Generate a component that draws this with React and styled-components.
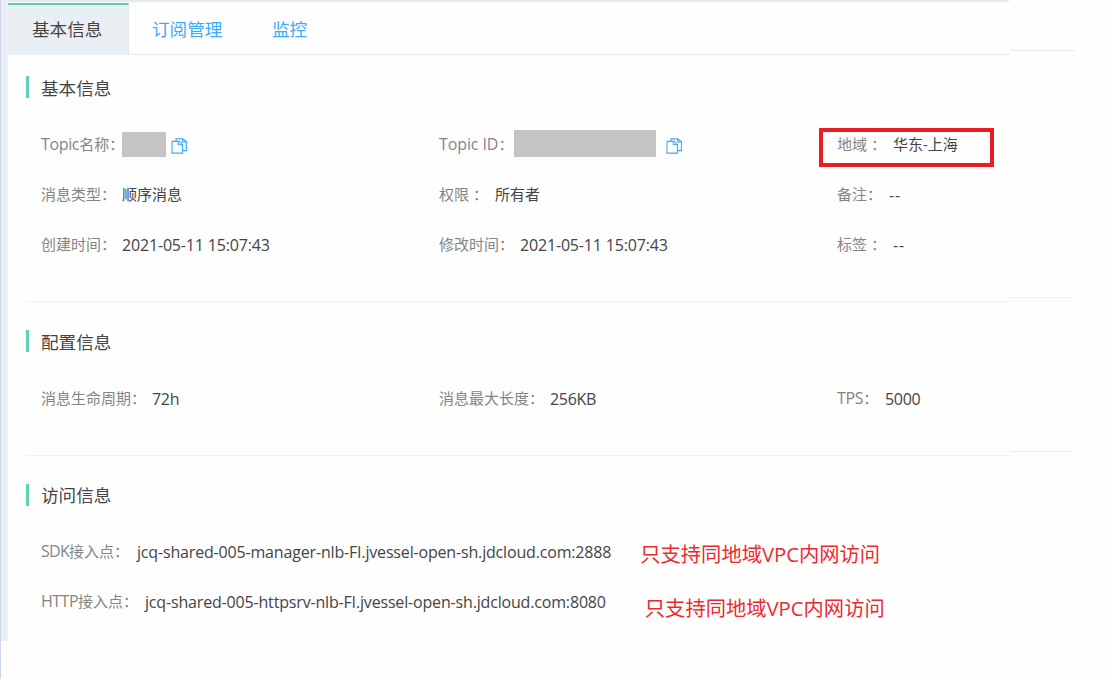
import React from "react";
import styled, { createGlobalStyle } from "styled-components";

const GlobalStyle = createGlobalStyle`
  * { box-sizing: border-box; }
  body {
    margin: 0;
    background: #fefefe;
    font-family: "Open Sans", "Noto Sans CJK SC", sans-serif;
    font-size: 15px;
    font-weight: 400;
    color: #444;
  }
`;

const Page = styled.div`
  display: flex;
  width: 1113px;
  height: 679px;
  overflow: hidden;
  border-left: 1px solid #cdd5ea;
`;

const Rail = styled.div`
  width: 6px;
  height: 641px;
  background: #e9eef5;
`;

const Panel = styled.main`
  width: 1002px;
  height: 641px;
  border-top: 2px solid #e5ebf2;
  border-left: 1px solid #f1f5f9;
`;

const Tabs = styled.nav`
  display: flex;
  height: 53px;
  border-bottom: 1px solid #e1e8f0;
`;

const Tab = styled.a`
  display: block;
  height: 52px;
  width: ${(p) => p.$width}px;
  margin-top: 1px;
  padding-left: ${(p) => p.$indent || 24}px;
  border-top: 2px solid ${(p) => (p.$active ? "#5fd0b2" : "transparent")};
  border-right: ${(p) => (p.$active ? "1px solid #e1e8f0" : "none")};
  background: ${(p) => (p.$active ? "#eaeff4" : "transparent")};
  color: ${(p) => (p.$active ? "#444" : "#38adff")};
  font-size: 17.6px;
  line-height: 48px;
  white-space: nowrap;
`;

const Section = styled.section`
  height: ${(p) => p.$height}px;
  margin-left: 18px;
  padding-top: ${(p) => p.$top}px;
  border-bottom: ${(p) => (p.$last ? "none" : "1px dotted #e6e6e6")};
`;

const Heading = styled.h2`
  height: 22px;
  margin: 0 0 ${(p) => p.$gap || 21}px;
  padding-left: 12px;
  border-left: 3px solid #5fd0b2;
  color: #444;
  font-size: 17.6px;
  font-weight: 400;
  line-height: ${(p) => p.$line || 24}px;
`;

const Row = styled.div`
  display: grid;
  grid-template-columns: 398px 398px 1fr;
  height: 50px;
  padding-left: 15px;
`;

const EndpointRow = styled.div`
  height: 50px;
  padding-left: 15px;
`;

const Field = styled.div`
  position: relative;
  display: flex;
  align-items: center;
  height: 50px;
  white-space: nowrap;
`;

const Label = styled.span`
  flex: none;
  width: ${(p) => p.$width}px;
  padding-bottom: 2px;
  color: #858585;
  line-height: 22px;
`;

const LabelLatin = styled.span`
  font-size: 16px;
  letter-spacing: ${(p) => p.$track ?? -0.35}px;
`;

const Value = styled.span`
  padding-bottom: 2px;
  color: #444;
  line-height: 22px;
`;

const LatinValue = styled(Value)`
  padding-bottom: 1px;
  font-size: 16px;
  letter-spacing: ${(p) => p.$track ?? -0.17}px;
`;

const Mask = styled.span`
  width: ${(p) => p.$width}px;
  height: ${(p) => p.$height}px;
  margin-right: ${(p) => p.$gap}px;
  margin-top: ${(p) => p.$shift}px;
  background: #c4c4c4;
`;

const Highlight = styled.span`
  position: absolute;
  left: -18px;
  top: 8px;
  width: 175px;
  height: 39px;
  border: 4px solid #ec1c24;
`;

const Note = styled.span`
  margin-left: ${(p) => p.$gap}px;
  margin-top: ${(p) => p.$drop}px;
  color: #ed2a30;
  font-size: 20.3px;
  line-height: 28px;
`;

const Side = styled.aside`
  width: 64px;
  margin-left: 1px;
`;

const SideLine = styled.div`
  height: ${(p) => p.$height}px;
  border-bottom: 1px ${(p) => (p.$solid ? "solid #e1e8f0" : "dotted #e6e6e6")};
`;

const CopySvg = styled.svg`
  display: block;
  margin-top: 2px;
`;

const CopyIcon = () => (
  <CopySvg width="16" height="16" viewBox="0 0 16 16" fill="none" stroke="#38adff" strokeWidth="1.1">
    <path d="M5 3V.9h6.7l3.7 2.6v9.1h-3.6M11.7 1v2.9h3.5" />
    <path d="M1 3.4h7l3.5 3v8.7H1zM7.3 3.6v3.2h4" />
  </CopySvg>
);

export default function App() {
  return (
    <>
      <GlobalStyle />
      <Page>
        <Rail />
        <Panel>
          <Tabs>
            <Tab $active $width={121}>基本信息</Tab>
            <Tab $width={119} $indent={23}>订阅管理</Tab>
            <Tab $width={90}>监控</Tab>
          </Tabs>

          <Section $height={247} $top={21}>
            <Heading $gap={22}>基本信息</Heading>
            <Row>
              <Field>
                <Label $width={81}><LabelLatin>Topic</LabelLatin>名称：</Label>
                <Mask $width={44} $height={25} $gap={5} $shift={-1} />
                <CopyIcon />
              </Field>
              <Field>
                <Label $width={75}><LabelLatin $track={-0.1}>Topic ID</LabelLatin>：</Label>
                <Mask $width={142} $height={27} $gap={10} $shift={-3} />
                <CopyIcon />
              </Field>
              <Field>
                <Label $width={56}>地域 ：</Label>
                <Value>华东-上海</Value>
                <Highlight />
              </Field>
            </Row>
            <Row>
              <Field>
                <Label $width={81}>消息类型：</Label>
                <Value>顺序消息</Value>
              </Field>
              <Field>
                <Label $width={56}>权限 ：</Label>
                <Value>所有者</Value>
              </Field>
              <Field>
                <Label $width={52}>备注：</Label>
                <LatinValue $track={0.9}>--</LatinValue>
              </Field>
            </Row>
            <Row>
              <Field>
                <Label $width={81}>创建时间：</Label>
                <LatinValue>2021-05-11 15:07:43</LatinValue>
              </Field>
              <Field>
                <Label $width={81}>修改时间：</Label>
                <LatinValue>2021-05-11 15:07:43</LatinValue>
              </Field>
              <Field>
                <Label $width={56}>标签 ：</Label>
                <LatinValue $track={0.9}>--</LatinValue>
              </Field>
            </Row>
          </Section>

          <Section $height={154} $top={28}>
            <Heading $gap={22}>配置信息</Heading>
            <Row>
              <Field>
                <Label $width={111}>消息生命周期：</Label>
                <LatinValue $track={-0.3}>72h</LatinValue>
              </Field>
              <Field>
                <Label $width={111}>消息最大长度：</Label>
                <LatinValue $track={-0.3}>256KB</LatinValue>
              </Field>
              <Field>
                <Label $width={48}><LabelLatin>TPS</LabelLatin>：</Label>
                <LatinValue $track={-0.3}>5000</LatinValue>
              </Field>
            </Row>
          </Section>

          <Section $height={185} $top={28} $last>
            <Heading $line={22}>访问信息</Heading>
            <EndpointRow>
              <Field>
                <Label $width={96}><LabelLatin $track={-0.7}>SDK</LabelLatin>接入点：</Label>
                <LatinValue>jcq-shared-005-manager-nlb-FI.jvessel-open-sh.jdcloud.com:2888</LatinValue>
                <Note $gap={29} $drop={4}>只支持同地域VPC内网访问</Note>
              </Field>
            </EndpointRow>
            <EndpointRow>
              <Field>
                <Label $width={104}><LabelLatin $track={-0.5}>HTTP</LabelLatin>接入点：</Label>
                <LatinValue>jcq-shared-005-httpsrv-nlb-FI.jvessel-open-sh.jdcloud.com:8080</LatinValue>
                <Note $gap={39} $drop={12}>只支持同地域VPC内网访问</Note>
              </Field>
            </EndpointRow>
          </Section>
        </Panel>
        <Side>
          <SideLine $height={51} $solid />
          <SideLine $height={247} />
          <SideLine $height={154} />
        </Side>
      </Page>
    </>
  );
}
